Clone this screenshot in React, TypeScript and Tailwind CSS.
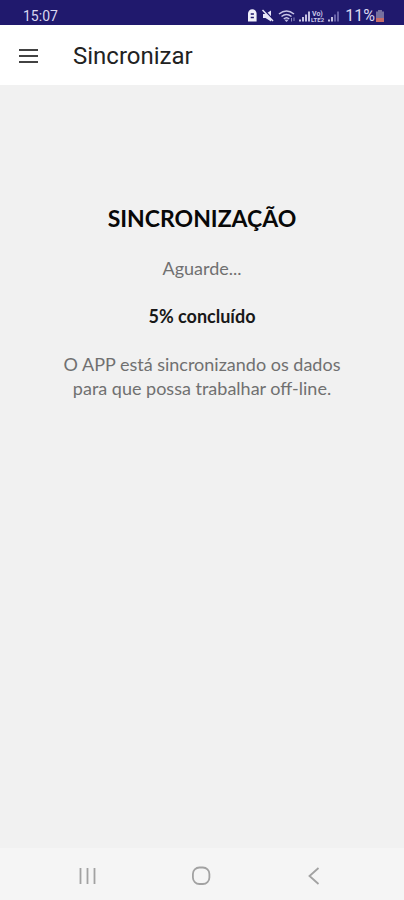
function StatusIcons() {
  return (
    <svg className="h-4 w-[94px]" viewBox="0 0 94 16" fill="none" aria-hidden="true">
      <path d="M1 5.500a4.300 4.300 0 0 1 8.600 0V13.500H1Z" fill="#f1f0fb" />
      <path d="M3.700 6h3.200M3.700 9.500h3.200" stroke="#20196d" strokeWidth="1.300" />
      <path d="M16 6h2.500L24 2.500v11L18.500 10H16Z" fill="#e8e6f8" />
      <path d="M16.500 1.500l10 10.500" stroke="#20196d" strokeWidth="1.800" />
      <path d="M15.500 2l10.500 11" stroke="#e8e6f8" strokeWidth="1.500" />
      <path d="M32 6q7.500-6 15 0M34.500 8.500q5-4 10 0M36.800 11q2.700-2.500 5.400 0" stroke="#c9c6e8" strokeWidth="1.600" />
      <path d="M38 12h3l-1.500 1.800ZM44.500 10v3.500M47 9.500V13" fill="#c9c6e8" stroke="#aaa6d6" strokeWidth=".8" />
      <path d="M53 13.500v-2M56 13.500V9M59 13.500V6.500M62 13.500V3.500" stroke="#d5d2ee" strokeWidth="1.800" />
      <text x="65" y="7.500" fontSize="7" fontWeight="700" fill="#c9c6e8" fontFamily="Roboto, sans-serif">Vo)</text>
      <text x="64" y="14" fontSize="6" fontWeight="700" fill="#c9c6e8" fontFamily="Roboto, sans-serif">LTE2</text>
      <path d="M82 13.500v-2M85 13.500V9" stroke="#d5d2ee" strokeWidth="1.800" />
      <path d="M88 13.500V6.500M91 13.500V3.500" stroke="#6f69ae" strokeWidth="1.800" />
    </svg>
  );
}

export default function App() {
  return (
    <div className="flex min-h-screen flex-col bg-[#f1f1f1] font-[Lato,sans-serif]">
      <div className="flex h-[25px] items-center justify-between bg-[#20196d] pr-5 pl-[23px] pt-[6px] font-[Roboto,sans-serif] text-sm leading-4 text-[#d9d7f0]">
        <span>15:07</span>
        <div className="flex items-center">
          <StatusIcons />
          <span className="mr-px ml-1 text-[16px]">11%</span>
          <svg className="h-3 w-2" viewBox="0 0 8 12" aria-hidden="true">
            <path d="M0 1.500h2V0h4v1.500h2V12H0Z" fill="#75709f" />
            <path d="M0 8h8v4H0Z" fill="#c56b68" />
          </svg>
        </div>
      </div>
      <header className="flex h-[60px] items-center gap-[35px] bg-white px-[19px] pt-[2px] font-[Roboto,sans-serif]">
        <button type="button" aria-label="Menu">
          <svg className="h-[14px] w-[19px]" viewBox="0 0 19 14" aria-hidden="true">
            <path d="M0 1h19M0 7h19M0 13h19" stroke="#424242" strokeWidth="2" />
          </svg>
        </button>
        <h1 className="text-2xl text-[#222222]">Sincronizar</h1>
      </header>
      <main className="flex flex-1 flex-col items-center px-14 pt-[117px] text-center text-lg leading-6 text-[#707070]">
        <h2 className="text-[23px] leading-8 font-bold text-[#080808]">SINCRONIZAÇÃO</h2>
        <p className="mt-[22px]">Aguarde...</p>
        <p className="mt-6 font-bold text-[#181818]">5% concluído</p>
        <p className="mt-6">
          O APP está sincronizando os dados
          <br />
          para que possa trabalhar off-line.
        </p>
      </main>
      <nav className="flex h-[52px] items-center justify-between bg-[#f5f5f5] px-[77px] pt-1">
        <button type="button" aria-label="Recentes">
          <svg className="h-5 w-5" viewBox="0 0 20 20" aria-hidden="true">
            <path d="M3.500 2v16M10.500 2v16M17.500 2v16" stroke="#a2a2a2" strokeWidth="1.800" />
          </svg>
        </button>
        <button type="button" aria-label="Início">
          <svg className="h-5 w-5" viewBox="0 0 20 20" aria-hidden="true">
            <rect x="0.900" y="1.500" width="16.500" height="16.500" rx="6.500" fill="none" stroke="#a2a2a2" strokeWidth="1.800" />
          </svg>
        </button>
        <button type="button" aria-label="Voltar">
          <svg className="h-5 w-5" viewBox="0 0 20 20" aria-hidden="true">
            <path d="M11.500 2l-9 8 9 8" fill="none" stroke="#a2a2a2" strokeWidth="1.800" />
          </svg>
        </button>
      </nav>
    </div>
  );
}
